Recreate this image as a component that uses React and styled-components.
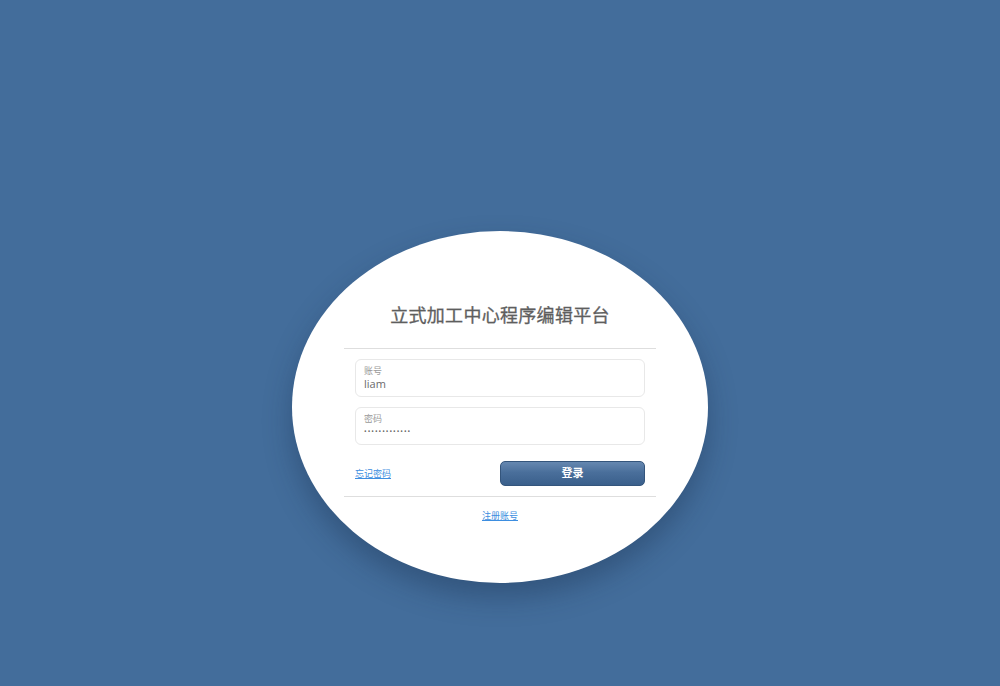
import React from "react"
import styled, { createGlobalStyle } from "styled-components"

const GlobalStyle = createGlobalStyle`
  html, body {
    margin: 0;
    padding: 0;
    background: #436d9b;
  }
  body {
    font-family: "Open Sans", "Noto Sans CJK SC", sans-serif;
  }
`

const Page = styled.div`
  width: 1000px;
  height: 686px;
  display: flex;
  justify-content: center;
  padding-top: 231px;
  box-sizing: border-box;
  background: #436d9b;
`

const Card = styled.div`
  width: 416px;
  height: 352px;
  border-radius: 50%;
  background: #fff;
  box-shadow: 0 14px 28px rgba(20, 40, 70, 0.35);
  display: flex;
  flex-direction: column;
  align-items: center;
  padding-top: 70px;
  box-sizing: border-box;
`

const Title = styled.h1`
  margin: 0;
  font-size: 18px;
  line-height: 26px;
  font-weight: 400;
  color: #5e5e5e;
  letter-spacing: 0.3px;
  font-family: "Noto Sans CJK SC", sans-serif;
  -webkit-text-stroke: 0.3px #5e5e5e;
`

const Divider = styled.div`
  width: 312px;
  height: 1px;
  background: #dedede;
  margin-top: ${({ $top }) => $top}px;
`

const Form = styled.div`
  width: 290px;
  display: flex;
  flex-direction: column;
  gap: 10px;
  margin-top: 10px;
`

const Field = styled.div`
  height: 38px;
  border: 1px solid #e8e8e8;
  border-radius: 6px;
  box-sizing: border-box;
  padding: 5px 8px 0;
  display: flex;
  flex-direction: column;
`

const Label = styled.span`
  font-size: 9px;
  line-height: 11px;
  color: #9a9a9a;
  font-family: "Noto Sans CJK SC", sans-serif;
`

const Value = styled.span`
  line-height: 15px;
  color: #6a6a6a;
  letter-spacing: ${({ $dots }) => ($dots ? "1px" : "0")};
  font-size: ${({ $dots }) => ($dots ? "7px" : "11px")};
`

const Actions = styled.div`
  width: 290px;
  display: flex;
  justify-content: space-between;
  align-items: center;
  margin-top: 16px;
`

const TextLink = styled.a`
  font-size: 9px;
  line-height: 12px;
  color: #3d8ee0;
  text-decoration: underline;
  font-family: "Noto Sans CJK SC", sans-serif;
  cursor: pointer;
`

const Button = styled.button`
  width: 145px;
  height: 25px;
  border: 1px solid #34557c;
  border-radius: 5px;
  background: linear-gradient(to bottom, #6587b0 0%, #4a6f9b 45%, #3a5f8b 100%);
  color: #fff;
  font-size: 11px;
  line-height: 14px;
  font-weight: 700;
  font-family: "Noto Sans CJK SC", sans-serif;
  padding: 0 0 3px;
  cursor: pointer;
`

const Footer = styled.div`
  display: flex;
  line-height: 12px;
  margin-top: 13px;
`

export default function App() {
  return (
    <>
      <GlobalStyle />
      <Page>
        <Card>
          <Title>立式加工中心程序编辑平台</Title>
          <Divider $top={21} />
          <Form>
            <Field>
              <Label>账号</Label>
              <Value>liam</Value>
            </Field>
            <Field>
              <Label>密码</Label>
              <Value $dots>•••••••••••••</Value>
            </Field>
          </Form>
          <Actions>
            <TextLink>忘记密码</TextLink>
            <Button>登录</Button>
          </Actions>
          <Divider $top={10} />
          <Footer>
            <TextLink>注册账号</TextLink>
          </Footer>
        </Card>
      </Page>
    </>
  )
}
